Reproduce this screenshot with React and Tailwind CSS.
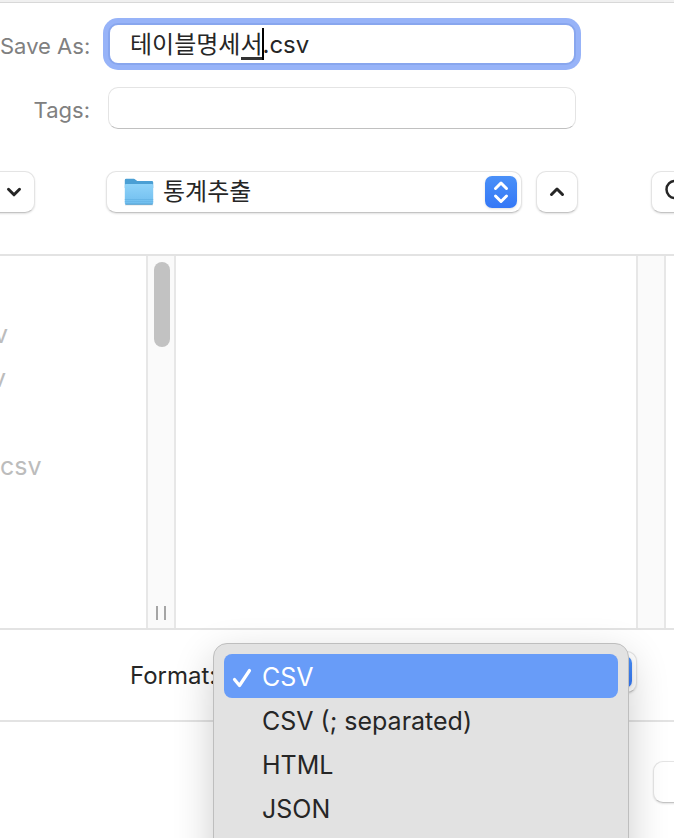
import React, { useState } from 'react'

const formats = ['CSV', 'CSV (; separated)', 'HTML', 'JSON']

const files = [
  { id: 1, name: '' },
  { id: 2, name: 'v', offset: '-ml-1.5' },
  { id: 3, name: 'v', offset: '-ml-2' },
  { id: 4, name: '' },
  { id: 5, name: 'csv' },
]

const raised = 'border border-[#e4e4e4] border-b-[#c4c4c4] bg-white shadow-[0_1px_2px_rgba(0,0,0,0.12)]'

const Chevron = ({ up }) => (
  <svg className="h-4 w-4" viewBox="0 0 16 16" fill="none" stroke="#262626" strokeWidth="3" strokeLinecap="round" strokeLinejoin="round">
    <path d={up ? 'M2.5 10.500 8 5l5.500 5.500' : 'M2.500 5.300 8 10.800l5.500-5.500'} />
  </svg>
)

const FolderIcon = () => (
  <svg className="h-7 w-[30px]" viewBox="0 0 30 28">
    <defs>
      <linearGradient id="folder" x1="0" y1="0" x2="0" y2="1">
        <stop offset="0" stopColor="#8fd3f9" />
        <stop offset="1" stopColor="#6fbdee" />
      </linearGradient>
    </defs>
    <path d="M1 26.500h28v.8H1z" fill="#000" opacity=".2" />
    <path d="M.8 2.200Q.8.800 2.200.800h7.600q.8 0 1.400.6l1.400 1.200q.6.500 1.400.500h13.800q1.400 0 1.400 1.400V10H.800z" fill="#4a9fd4" />
    <path d="M.8 7.400Q.8 6 2.200 6h25.600q1.400 0 1.400 1.400v17.800q0 1.400-1.400 1.400H2.200q-1.400 0-1.400-1.400z" fill="url(#folder)" />
    <path d="M.8 21.500h28.400" stroke="#63b2e4" strokeWidth=".8" />
    <path d="M.8 23.500h28.400" stroke="#63b2e4" strokeWidth=".6" />
    <path d="M1.500 26.200h27" stroke="#4b97c9" strokeWidth=".9" />
  </svg>
)

const Stepper = () => (
  <svg className="h-8 w-8 rounded-[7px] bg-gradient-to-b from-[#4a90f8] to-[#3477f6] shadow-sm" viewBox="0 0 32 32" fill="none" stroke="#fff" strokeWidth="3" strokeLinecap="round" strokeLinejoin="round">
    <path d="m10.500 12.500 5.500-5.500 5.500 5.500M10.500 20l5.500 5.500 5.500-5.500" />
  </svg>
)

const Gutter = ({ children }) => (
  <div className="relative w-[30px] shrink-0 border-x-2 border-[#e7e7e7] bg-[#fafafa]">{children}</div>
)

const FileColumns = () => (
  <div className="flex h-[376px] border-y-2 border-[#e3e3e3]">
    <ul className="w-[146px] shrink-0 pt-3 text-[25px] text-[#bcbcbc]">
      {files.map((file) => (
        <li key={file.id} className={`h-11 leading-[44px] ${file.offset || ''}`}>{file.name}</li>
      ))}
    </ul>
    <Gutter>
      <div className="absolute left-1.5 top-1.5 h-[85px] w-4 rounded-full bg-[#c2c2c2]" />
      <div className="absolute bottom-2 left-2 h-3.5 w-2.5 border-x-2 border-[#a5a5a5]" />
    </Gutter>
    <div className="flex-1" />
    <Gutter />
    <div className="w-2" />
  </div>
)

const FormatMenu = ({ value, onSelect }) => (
  <div role="listbox" aria-label="Format" className="absolute -left-2 -top-2 z-10 w-[416px] rounded-[14px] border border-[#bebebe] bg-[#e2e2e2] px-[10px] pb-12 pt-[10px] shadow-[0_14px_40px_rgba(0,0,0,0.2)]">
    {formats.map((format) => {
      const selected = format === value
      return (
        <button
          key={format}
          role="option"
          aria-selected={selected}
          onClick={() => onSelect(format)}
          className={`flex h-11 w-full items-center rounded-lg pt-1 text-left text-[25px] ${selected ? 'bg-[#689cf8] text-white' : 'text-[#262626]'}`}
        >
          <span className="flex w-[38px] shrink-0 pl-2">
            {selected && (
              <svg className="h-5 w-5" viewBox="0 0 20 20" fill="none" stroke="#fff" strokeWidth="3.200" strokeLinecap="round" strokeLinejoin="round">
                <path d="m2.500 11.500 5 6L17.500 2.500" />
              </svg>
            )}
          </span>
          {format}
        </button>
      )
    })}
  </div>
)

const App = () => {
  const [name, setName] = useState('테이블명세서.csv')
  const [tags, setTags] = useState('')
  const [format, setFormat] = useState('CSV')

  return (
    <div className="flex h-screen flex-col overflow-hidden bg-white font-['Inter','Noto_Sans_CJK_KR',sans-serif] text-[22px] text-[#262626]">
      <div className="h-[3px] shrink-0 border-b border-[#d8d8d8] bg-[#f0f0f0]" />

      <div className="grid shrink-0 grid-cols-[90px_468px] items-center gap-x-[18px] gap-y-[22px] pt-5">
        <label htmlFor="name" className="whitespace-nowrap pt-1 text-right text-[#808080]">Save As:</label>
        <div className="relative">
          <input
            id="name"
            value={name}
            onChange={(e) => setName(e.target.value)}
            className="block h-[42px] w-full rounded-[10px] border-2 border-[#88a6ee] bg-white px-5 pb-1 text-[24px] outline-none ring-[5px] ring-[#97b3f8]"
          />
          {/* underline of the syllable being composed, and the caret */}
          <div className="absolute left-[133px] top-[34px] h-[3px] w-[22px] bg-[#333]" />
          <div className="absolute left-[154px] top-[5px] h-8 w-0.5 bg-black" />
        </div>
        <label htmlFor="tags" className="pt-1 text-right text-[#808080]">Tags:</label>
        <input
          id="tags"
          value={tags}
          onChange={(e) => setTags(e.target.value)}
          className="block h-[42px] w-full rounded-[10px] border border-[#e4e4e4] border-b-[#c0c0c0] bg-white px-5 outline-none"
        />
      </div>

      <div className="flex shrink-0 items-center pb-[41px] pt-[42px]">
        <button aria-label="View options" className={`-ml-4 flex h-[42px] w-[51px] items-center justify-end rounded-[10px] pr-3 ${raised}`}>
          <Chevron />
        </button>
        <div className="relative ml-[71px] w-[416px]">
          <select aria-label="Folder" className={`block h-[42px] w-full appearance-none rounded-[10px] pl-14 text-[24px] leading-9 ${raised}`}>
            <option>통계추출</option>
          </select>
          <div className="pointer-events-none absolute left-[18px] top-[7px]"><FolderIcon /></div>
          <div className="pointer-events-none absolute right-[5px] top-[5px]"><Stepper /></div>
        </div>
        <button aria-label="Collapse" className={`ml-3.5 flex h-[42px] w-[42px] items-center justify-center rounded-[10px] ${raised}`}>
          <Chevron up />
        </button>
        <div className="relative -mr-4 ml-[73px] flex-1">
          <input type="search" aria-label="Search" className={`block h-[42px] w-full rounded-[10px] ${raised}`} />
          <svg className="absolute left-[13px] top-2 h-6 w-6" viewBox="0 0 24 24" fill="none" stroke="#262626" strokeWidth="2.500" strokeLinecap="round">
            <circle cx="11" cy="10.500" r="8.500" />
            <path d="m17 17 6 6" />
          </svg>
        </div>
      </div>

      <FileColumns />

      <div className="flex shrink-0 border-b-2 border-[#e3e3e3] pb-[26px] pt-[21px]">
        <label htmlFor="format" className="w-[221px] whitespace-nowrap pl-[130px] pt-[7px] text-[24px]">Format:</label>
        <div className="relative w-[416px]">
          <select
            id="format"
            value={format}
            onChange={(e) => setFormat(e.target.value)}
            className={`block h-[42px] w-full appearance-none rounded-[10px] pl-4 ${raised}`}
          >
            {formats.map((f) => <option key={f}>{f}</option>)}
          </select>
          <div className="pointer-events-none absolute right-[5px] top-[5px]"><Stepper /></div>
          <FormatMenu value={format} onSelect={setFormat} />
        </div>
      </div>

      <div className="-mr-20 flex justify-end pt-[39px]">
        <button aria-label="Cancel" className={`h-[42px] w-[101px] rounded-[10px] ${raised}`} />
      </div>
    </div>
  )
}

export default App
